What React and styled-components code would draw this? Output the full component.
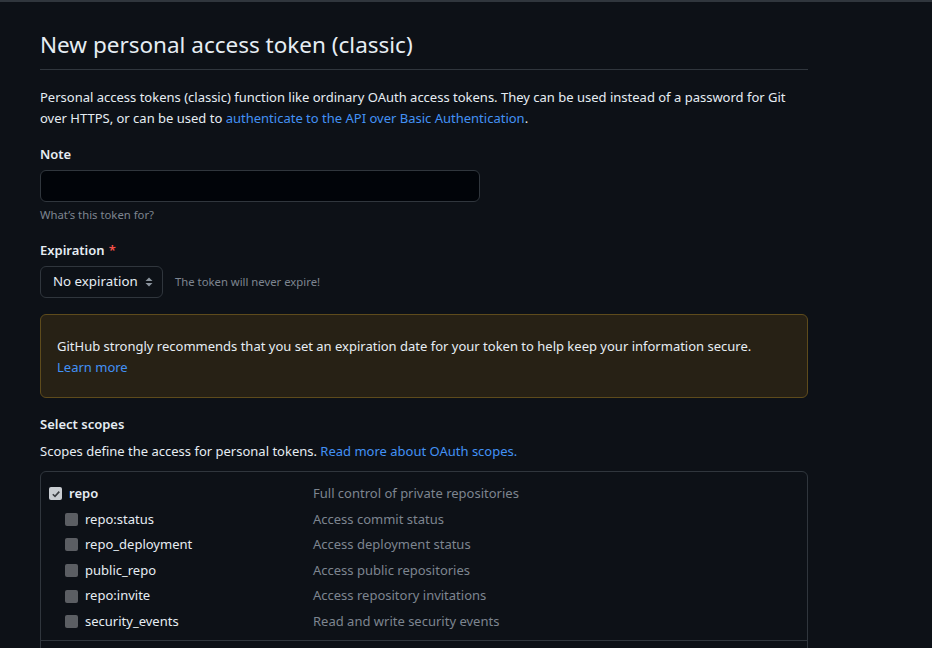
import React from "react";
import styled, { createGlobalStyle } from "styled-components";

const GlobalStyle = createGlobalStyle`
  html, body {
    margin: 0;
    padding: 0;
    background: #0d1117;
  }
  body {
    font-family: "Noto Sans", "Liberation Sans", sans-serif;
    color: #e6edf3;
    font-size: 13px;
    line-height: 1.5;
  }
`;

const Page = styled.div`
  border-top: 2px solid #30363d;
  padding: 0 124px 0 40px;
  box-sizing: border-box;
  overflow: hidden;
  height: 648px;
`;

const Content = styled.div`
  width: 768px;
`;

const Title = styled.h1`
  margin: 0;
  padding: 28px 0 9px;
  font-size: 22.5px;
  font-weight: 400;
  line-height: 30px;
  border-bottom: 1px solid #30363d;
`;

const Intro = styled.p`
  margin: 17px 0 0;
  line-height: 21px;
`;

const Link = styled.a`
  color: #4391f5;
  text-decoration: none;
`;

const Field = styled.div`
  margin-top: ${(p) => p.$mt || 16}px;
`;

const Label = styled.div`
  font-weight: 600;
  line-height: 20px;
  margin-bottom: 6px;
`;

const Required = styled.span`
  color: #f85149;
  margin-left: 4px;
`;

const TextInput = styled.div`
  width: 440px;
  height: 32px;
  box-sizing: border-box;
  background: #010409;
  border: 1px solid #30363d;
  border-radius: 6px;
`;

const Hint = styled.div`
  font-size: 11.3px;
  color: #7d8590;
  line-height: 18px;
  margin-top: ${(p) => p.$mt ?? 4}px;
`;

const SelectRow = styled.div`
  display: flex;
  align-items: center;
  gap: 12px;
`;

const Select = styled.div`
  width: 123px;
  height: 32px;
  box-sizing: border-box;
  padding: 0 8px 0 12px;
  display: flex;
  align-items: center;
  justify-content: space-between;
  background: #0d1117;
  border: 1px solid #30363d;
  border-radius: 6px;
  font-size: 13.3px;
`;

const Notice = styled.div`
  margin-top: 16px;
  padding: 21px 16px;
  height: 84px;
  box-sizing: border-box;
  background: #272115;
  border: 1px solid #5e4b1c;
  border-radius: 6px;
  line-height: 21px;
`;

const SectionHead = styled.div`
  margin-top: 16px;
  font-weight: 600;
  line-height: 20px;
`;

const SectionNote = styled.div`
  margin-top: 7px;
  line-height: 20px;
`;

const ScopeBox = styled.div`
  margin-top: 10px;
  border: 1px solid #30363d;
  border-radius: 6px;
  padding: 9px 0 40px;
`;

const ScopeGroup = styled.div`
  padding: 0 8px 5px;
  border-bottom: 1px solid #30363d;
`;

const ScopeRow = styled.div`
  display: grid;
  grid-template-columns: 264px 1fr;
  align-items: center;
  height: 25.6px;
`;

const ScopeName = styled.div`
  display: flex;
  align-items: center;
  gap: 7px;
  padding-left: ${(p) => (p.$child ? 16 : 0)}px;
  font-weight: ${(p) => (p.$child ? 400 : 600)};
`;

const ScopeDesc = styled.div`
  color: #7d8590;
`;

const Box = styled.span`
  width: 13px;
  height: 13px;
  border-radius: 2px;
  box-sizing: border-box;
  display: inline-flex;
  align-items: center;
  justify-content: center;
  background: ${(p) => (p.$checked ? "#c9cdd2" : "#5b5e63")};
  flex: none;
`;

const Checkbox = ({ checked }) => (
  <Box $checked={checked}>
    {checked && (
      <svg width="10" height="10" viewBox="0 0 10 10">
        <path d="M1.8 5.2 L4 7.4 L8.3 2.6" fill="none" stroke="#3a3d42" strokeWidth="1.6" />
      </svg>
    )}
  </Box>
);

const scopes = [
  { name: "repo:status", desc: "Access commit status" },
  { name: "repo_deployment", desc: "Access deployment status" },
  { name: "public_repo", desc: "Access public repositories" },
  { name: "repo:invite", desc: "Access repository invitations" },
  { name: "security_events", desc: "Read and write security events" },
];

const App = () => (
  <>
    <GlobalStyle />
    <Page>
      <Content>
        <Title>New personal access token (classic)</Title>
        <Intro>
          Personal access tokens (classic) function like ordinary OAuth access tokens. They can be used instead of a
          password for Git over HTTPS, or can be used to{" "}
          <Link href="#">authenticate to the API over Basic Authentication</Link>.
        </Intro>

        <Field $mt={15}>
          <Label>Note</Label>
          <TextInput />
          <Hint>What’s this token for?</Hint>
        </Field>

        <Field $mt={16}>
          <Label>
            Expiration<Required>*</Required>
          </Label>
          <SelectRow>
            <Select>
              No expiration
              <svg width="10" height="14" viewBox="0 0 10 14">
                <path d="M5 2.5 L8.5 6 H1.5 Z M5 11.5 L8.5 8 H1.5 Z" fill="#8b949e" />
              </svg>
            </Select>
            <Hint $mt={0}>The token will never expire!</Hint>
          </SelectRow>
        </Field>

        <Notice>
          <div>
            GitHub strongly recommends that you set an expiration date for your token to help keep your information
            secure.
          </div>
          <Link href="#">Learn more</Link>
        </Notice>

        <SectionHead>Select scopes</SectionHead>
        <SectionNote>
          Scopes define the access for personal tokens. <Link href="#">Read more about OAuth scopes.</Link>
        </SectionNote>

        <ScopeBox>
          <ScopeGroup>
            <ScopeRow>
              <ScopeName>
                <Checkbox checked />
                repo
              </ScopeName>
              <ScopeDesc>Full control of private repositories</ScopeDesc>
            </ScopeRow>
            {scopes.map((s) => (
              <ScopeRow key={s.name}>
                <ScopeName $child>
                  <Checkbox />
                  {s.name}
                </ScopeName>
                <ScopeDesc>{s.desc}</ScopeDesc>
              </ScopeRow>
            ))}
          </ScopeGroup>
        </ScopeBox>
      </Content>
    </Page>
  </>
);

export default App;
